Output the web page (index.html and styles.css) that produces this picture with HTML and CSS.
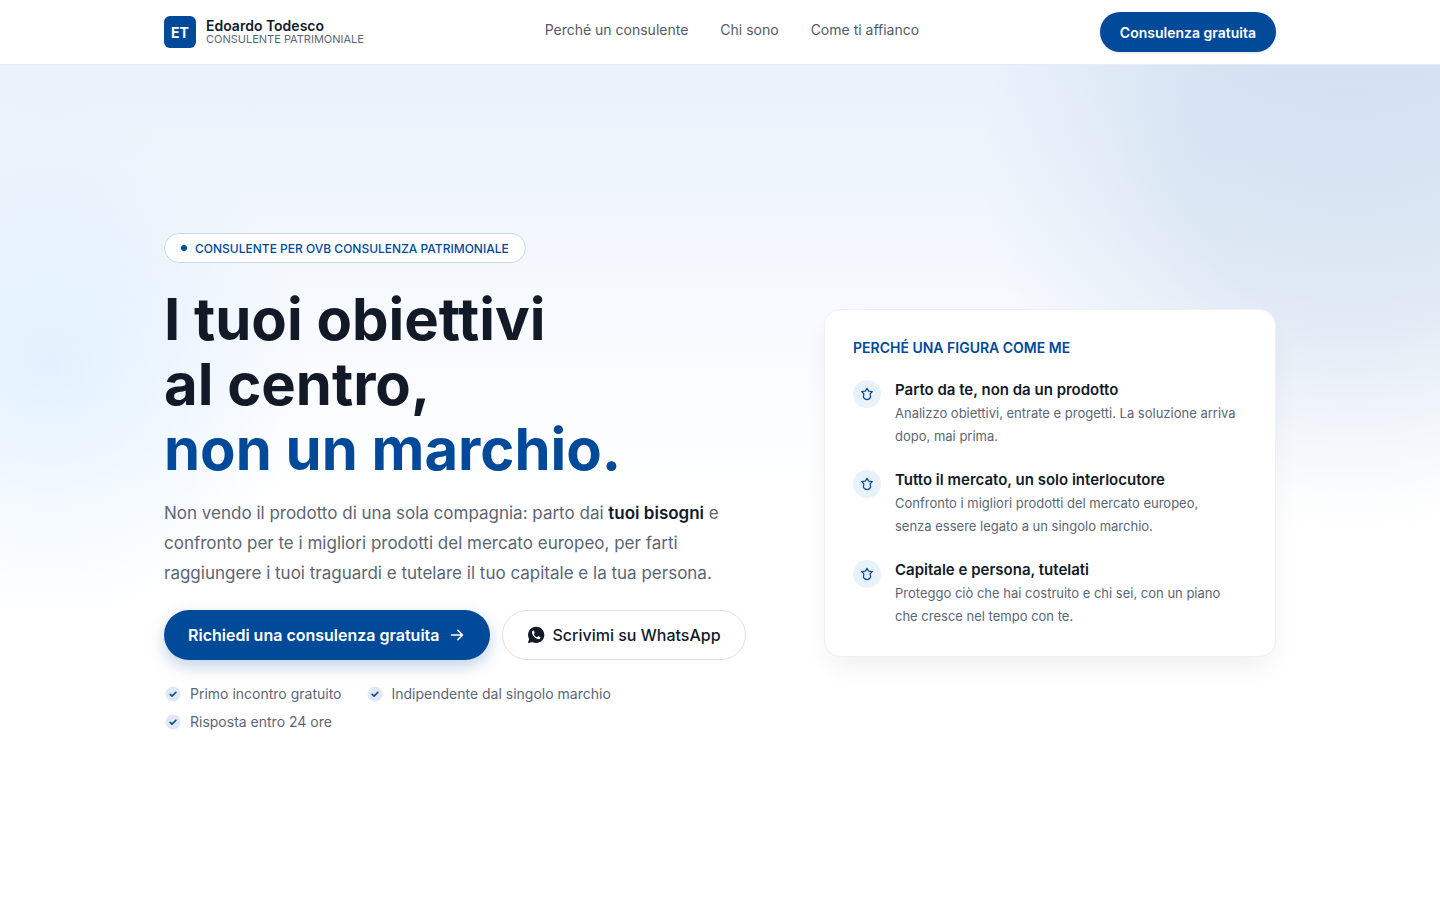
FILE: index.html
```html
<!DOCTYPE html>
<html lang="it">
<head>
    <meta charset="UTF-8">
    <meta name="viewport" content="width=device-width, initial-scale=1.0">
    <title>Edoardo Todesco - Consulente patrimoniale</title>
    <link rel="stylesheet" href="styles.css">
</head>
<body>

<!-- Shared icons -->
<svg class="sprite" aria-hidden="true">
    <symbol id="icon-star" viewBox="0 0 14 14">
        <path d="M7 1.300 8.600 4.100 12.300 4.500 10.100 6.800 10.600 10.200C9.900 10.800 9.700 12.300 7 12.600 4.300 12.300 4.100 10.800 3.400 10.200L3.900 6.800 1.700 4.500 5.400 4.100Z" fill="none" stroke="currentColor" stroke-width="1.200" stroke-linejoin="round"/>
    </symbol>
    <symbol id="icon-check" viewBox="0 0 16 16">
        <circle cx="8" cy="8" r="6.600" fill="#dfe8f4"/>
        <path d="m5.400 8.200 1.700 1.700 3.500-3.500" fill="none" stroke="currentColor" stroke-width="1.400" stroke-linecap="round" stroke-linejoin="round"/>
    </symbol>
</svg>

<header class="site-header">
    <div class="container header-inner">
        <a class="brand" href="#">
            <span class="brand-mark">ET</span>
            <span class="brand-text">
                <span class="brand-name">Edoardo Todesco</span>
                <span class="brand-role">CONSULENTE PATRIMONIALE</span>
            </span>
        </a>
        <nav class="main-nav">
            <a href="#perche">Perché un consulente</a>
            <a href="#chi-sono">Chi sono</a>
            <a href="#affianco">Come ti affianco</a>
        </nav>
        <button class="btn btn-primary btn-small" type="button">Consulenza gratuita</button>
    </div>
</header>

<main class="hero">
    <div class="container hero-grid">
        <div class="hero-copy">
            <p class="badge">CONSULENTE PER OVB CONSULENZA PATRIMONIALE</p>
            <h1>I tuoi obiettivi<br>al centro,<br><span class="accent">non un marchio.</span></h1>
            <p class="lead">Non vendo il prodotto di una sola compagnia: parto dai <strong>tuoi bisogni</strong> e confronto per te i migliori prodotti del mercato europeo, per farti raggiungere i tuoi traguardi e tutelare il tuo capitale e la tua persona.</p>
            <div class="actions">
                <button class="btn btn-primary btn-large" type="button">
                    Richiedi una consulenza gratuita
                    <svg width="18" height="18" viewBox="0 0 18 18" fill="none" stroke="currentColor" stroke-width="1.500" stroke-linecap="round" stroke-linejoin="round" aria-hidden="true"><path d="M3.500 9h11M9.800 4.300 14.500 9l-4.700 4.700"/></svg>
                </button>
                <button class="btn btn-outline" type="button">
                    <svg width="18" height="18" viewBox="0 0 18 18" aria-hidden="true">
                        <path d="M9.200.8a8.100 8.100 0 1 1-3.900 15.200L.9 17.200l1.200-4.300A8.100 8.100 0 0 1 9.200.8Z" fill="currentColor"/>
                        <path d="M6.100 4.600c-.9.500-1.300 1.500-1 2.600.8 3 2.900 5.100 5.800 5.900 1.200.3 2.200-.3 2.500-1.200.2-.6.100-.8-.3-1l-1.500-.7c-.3-.1-.6 0-.8.300l-.5.600c-.2.200-.4.200-.7.100C8.300 10.600 7.400 9.700 6.900 8.500c-.1-.2-.1-.4.100-.6l.5-.6c.2-.2.200-.4.100-.7L7 5c-.2-.4-.5-.6-.9-.4Z" fill="#fff"/>
                    </svg>
                    Scrivimi su WhatsApp
                </button>
            </div>
            <ul class="checks">
                <li><svg width="18" height="18" aria-hidden="true"><use href="#icon-check"/></svg>Primo incontro gratuito</li>
                <li><svg width="18" height="18" aria-hidden="true"><use href="#icon-check"/></svg>Indipendente dal singolo marchio</li>
                <li><svg width="18" height="18" aria-hidden="true"><use href="#icon-check"/></svg>Risposta entro 24 ore</li>
            </ul>
        </div>

        <aside class="card">
            <h2>PERCHÉ UNA FIGURA COME ME</h2>
            <ul class="reasons">
                <li>
                    <span class="reason-icon"><svg width="14" height="14" aria-hidden="true"><use href="#icon-star"/></svg></span>
                    <div>
                        <h3>Parto da te, non da un prodotto</h3>
                        <p>Analizzo obiettivi, entrate e progetti. La soluzione arriva<br> dopo, mai prima.</p>
                    </div>
                </li>
                <li>
                    <span class="reason-icon"><svg width="14" height="14" aria-hidden="true"><use href="#icon-star"/></svg></span>
                    <div>
                        <h3>Tutto il mercato, un solo interlocutore</h3>
                        <p>Confronto i migliori prodotti del mercato europeo,<br> senza essere legato a un singolo marchio.</p>
                    </div>
                </li>
                <li>
                    <span class="reason-icon"><svg width="14" height="14" aria-hidden="true"><use href="#icon-star"/></svg></span>
                    <div>
                        <h3>Capitale e persona, tutelati</h3>
                        <p>Proteggo ciò che hai costruito e chi sei, con un piano<br> che cresce nel tempo con te.</p>
                    </div>
                </li>
            </ul>
        </aside>
    </div>
</main>

</body>
</html>
```

FILE: styles.css
```css
:root {
    --blue: #004a99;
    --blue-soft: #e9f1fb;
    --ink: #121a28;
    --muted: #5b6675;
    --border: #dcdfe3;
}

* {
    box-sizing: border-box;
    margin: 0;
    padding: 0;
}

body {
    font-family: Inter, "Liberation Sans", sans-serif;
    color: var(--ink);
    background: #fff;
}

ul { list-style: none; }
a { color: inherit; text-decoration: none; }
.sprite { display: none; }

.container {
    width: 100%;
    max-width: 1160px;
    margin: 0 auto;
    padding: 0 24px;
}

/* Header */
.site-header {
    background: #fff;
    border-bottom: 1px solid #e8ebef;
}

.header-inner {
    height: 64px;
    display: flex;
    align-items: center;
    justify-content: space-between;
}

.brand {
    display: flex;
    align-items: center;
    gap: 10px;
}

.brand-mark {
    width: 32px;
    height: 32px;
    border-radius: 6px;
    background: var(--blue);
    color: #fff;
    font-size: 14px;
    font-weight: 700;
    display: flex;
    align-items: center;
    justify-content: center;
}

.brand-text {
    display: flex;
    flex-direction: column;
}

.brand-name {
    font-size: 14px;
    line-height: 14px;
    font-weight: 600;
}

.brand-role {
    font-size: 11px;
    line-height: 12px;
    color: var(--muted);
}

.main-nav {
    display: flex;
    gap: 32px;
    padding-bottom: 4px;
    font-size: 14px;
    line-height: 20px;
    color: #535b66;
}

/* Buttons */
.btn {
    display: flex;
    align-items: center;
    justify-content: center;
    gap: 8px;
    border: 1px solid transparent;
    border-radius: 30px;
    font-family: inherit;
    font-size: 16px;
    font-weight: 600;
    white-space: nowrap;
    cursor: pointer;
}

.btn-primary { background: var(--blue); color: #fff; }
.btn-primary:hover { background: #003f82; }

.btn-small {
    height: 40px;
    padding: 0 19px;
    font-size: 14px;
    box-shadow: 0 1px 3px rgba(0, 40, 90, 0.15);
}

.btn-large {
    height: 50px;
    padding: 0 23px;
    box-shadow: 0 6px 16px rgba(0, 74, 153, 0.25);
}

.btn-outline {
    height: 50px;
    padding: 0 24px;
    background: #fff;
    color: var(--ink);
    font-weight: 500;
    border-color: var(--border);
}

/* Hero */
.hero {
    min-height: calc(100vh - 65px);
    padding: 40px 0;
    display: flex;
    align-items: center;
    background:
        radial-gradient(circle at calc(100% - 90px) 100px, rgba(0, 74, 153, 0.1) 0, rgba(0, 74, 153, 0.09) 160px, rgba(0, 74, 153, 0.05) 240px, rgba(0, 74, 153, 0) 370px),
        radial-gradient(circle at 50px 300px, rgba(205, 231, 255, 0.5) 0, rgba(205, 231, 255, 0.3) 110px, rgba(205, 231, 255, 0) 260px),
        linear-gradient(#e9f1fb, #f7fafe 30%, #fff 52%);
}

.hero-grid {
    display: grid;
    grid-template-columns: minmax(0, 1fr) 452px;
    gap: 64px;
    align-items: center;
}

.badge {
    display: inline-flex;
    align-items: center;
    gap: 8px;
    height: 30px;
    padding: 0 16px;
    border: 1px solid #c6d8eb;
    border-radius: 30px;
    background: #fff;
    color: var(--blue);
    font-size: 12px;
    font-weight: 500;
}

.badge::before {
    content: "";
    width: 6px;
    height: 6px;
    border-radius: 50%;
    background: var(--blue);
}

h1 {
    margin-top: 24px;
    font-size: 58px;
    line-height: 65px;
    font-weight: 700;
}

.accent { color: var(--blue); }

.lead {
    margin-top: 16px;
    font-size: 17px;
    line-height: 30px;
    color: var(--muted);
}

.lead strong { color: var(--ink); font-weight: 600; }

.actions {
    display: flex;
    gap: 12px;
    margin-top: 22px;
}

.checks {
    display: flex;
    flex-wrap: wrap;
    gap: 8px 24px;
    margin-top: 24px;
    font-size: 14px;
    line-height: 20px;
    color: var(--muted);
}

.checks li {
    display: flex;
    align-items: center;
    gap: 8px;
}

.checks svg { color: var(--blue); }

/* Card */
.card {
    padding: 28px;
    border: 1px solid #eef0f3;
    border-radius: 16px;
    background: #fff;
    box-shadow: 0 14px 28px -6px rgba(0, 0, 0, 0.07);
}

.card h2 {
    font-size: 14px;
    line-height: 20px;
    font-weight: 600;
    color: var(--blue);
}

.reasons {
    display: flex;
    flex-direction: column;
    gap: 20px;
    margin-top: 20px;
}

.reasons li {
    display: flex;
    gap: 14px;
}

.reason-icon {
    flex-shrink: 0;
    width: 28px;
    height: 28px;
    margin-top: 2px;
    border-radius: 50%;
    background: var(--blue-soft);
    color: var(--blue);
    display: flex;
    align-items: center;
    justify-content: center;
}

.reasons h3 {
    font-size: 15px;
    line-height: 24px;
    font-weight: 600;
}

.reasons p {
    font-size: 13px;
    line-height: 23px;
    color: var(--muted);
}

/* Responsiveness */
@media (max-width: 1000px) {
    .hero-grid { grid-template-columns: 1fr; }
    .main-nav { display: none; }
}

@media (max-width: 600px) {
    h1 { font-size: 40px; line-height: 44px; }
    .actions { flex-direction: column; }
    .badge { height: auto; padding: 6px 16px; }
    .reasons br { display: none; }
}
```
